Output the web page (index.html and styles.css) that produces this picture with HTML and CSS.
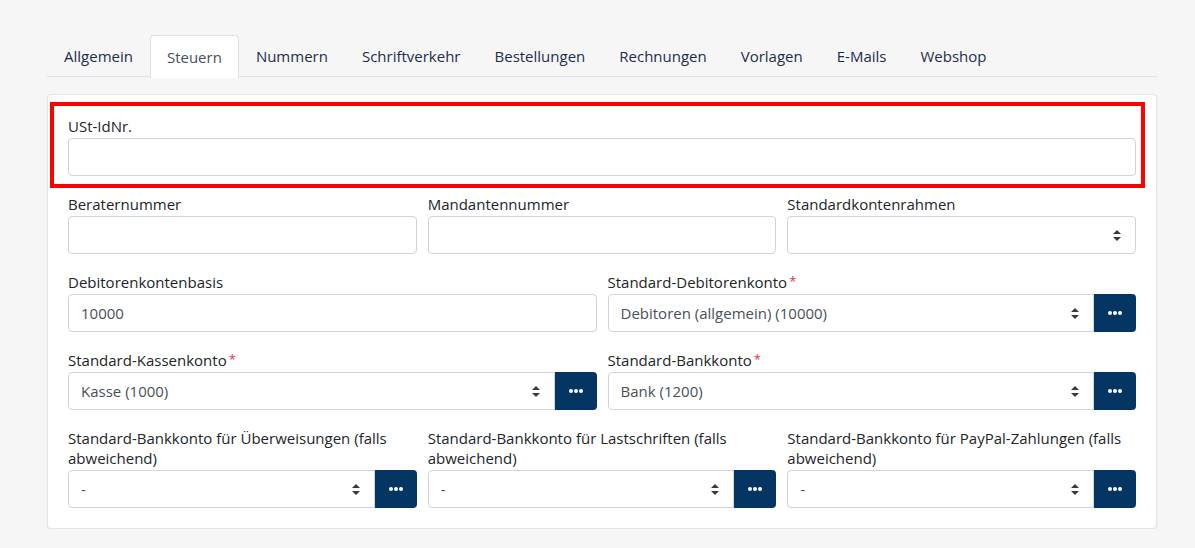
FILE: index.html
```html
<!DOCTYPE html>
<html lang="de">
<head>
<meta charset="utf-8">
<title>Einstellungen</title>
<link rel="stylesheet" href="styles.css">
</head>
<body>
<div class="page">
  <nav class="tabs">
    <a class="tab">Allgemein</a>
    <a class="tab active">Steuern</a>
    <a class="tab">Nummern</a>
    <a class="tab">Schriftverkehr</a>
    <a class="tab">Bestellungen</a>
    <a class="tab">Rechnungen</a>
    <a class="tab">Vorlagen</a>
    <a class="tab">E-Mails</a>
    <a class="tab">Webshop</a>
  </nav>
  <div class="card">
    <div class="group highlight">
      <label class="label">USt-IdNr.</label>
      <div class="input"></div>
    </div>
    <div class="row cols-3">
      <div class="group">
        <label class="label">Beraternummer</label>
        <div class="input"></div>
      </div>
      <div class="group">
        <label class="label">Mandantennummer</label>
        <div class="input"></div>
      </div>
      <div class="group">
        <label class="label">Standardkontenrahmen</label>
        <div class="input select"><span class="value"></span><span class="caret"></span></div>
      </div>
    </div>
    <div class="row cols-2">
      <div class="group">
        <label class="label">Debitorenkontenbasis</label>
        <div class="input"><span class="value">10000</span></div>
      </div>
      <div class="group">
        <label class="label">Standard-Debitorenkonto<span class="req">*</span></label>
        <div class="input-group">
          <div class="input select"><span class="value">Debitoren (allgemein) (10000)</span><span class="caret"></span></div>
          <button class="more"><span class="dots"><i></i><i></i><i></i></span></button>
        </div>
      </div>
    </div>
    <div class="row cols-2">
      <div class="group">
        <label class="label">Standard-Kassenkonto<span class="req">*</span></label>
        <div class="input-group">
          <div class="input select"><span class="value">Kasse (1000)</span><span class="caret"></span></div>
          <button class="more"><span class="dots"><i></i><i></i><i></i></span></button>
        </div>
      </div>
      <div class="group">
        <label class="label">Standard-Bankkonto<span class="req">*</span></label>
        <div class="input-group">
          <div class="input select"><span class="value">Bank (1200)</span><span class="caret"></span></div>
          <button class="more"><span class="dots"><i></i><i></i><i></i></span></button>
        </div>
      </div>
    </div>
    <div class="row cols-3">
      <div class="group">
        <label class="label">Standard-Bankkonto für Überweisungen (falls abweichend)</label>
        <div class="input-group">
          <div class="input select"><span class="value">-</span><span class="caret"></span></div>
          <button class="more"><span class="dots"><i></i><i></i><i></i></span></button>
        </div>
      </div>
      <div class="group">
        <label class="label">Standard-Bankkonto für Lastschriften (falls abweichend)</label>
        <div class="input-group">
          <div class="input select"><span class="value">-</span><span class="caret"></span></div>
          <button class="more"><span class="dots"><i></i><i></i><i></i></span></button>
        </div>
      </div>
      <div class="group">
        <label class="label">Standard-Bankkonto für PayPal-Zahlungen (falls abweichend)</label>
        <div class="input-group">
          <div class="input select"><span class="value">-</span><span class="caret"></span></div>
          <button class="more"><span class="dots"><i></i><i></i><i></i></span></button>
        </div>
      </div>
    </div>
  </div>
</div>
</body>
</html>
```
FILE: styles.css
```css
* { box-sizing: border-box; }
html, body { margin: 0; padding: 0; }
body {
  background: #f6f6f6;
  font-family: "Open Sans", "Noto Sans", sans-serif;
  font-size: 15px;
  color: #212529;
}
.page {
  width: 1110px;
  margin-left: 47px;
  padding-top: 35px;
}
.tabs {
  display: flex;
  border-bottom: 1px solid #dee2e6;
  height: 42px;
}
.tab {
  display: flex;
  align-items: center;
  height: 42px;
  padding: 0 16px 1px;
  color: #1c2d4c;
  border: 1px solid transparent;
  border-bottom: none;
  border-radius: 4px 4px 0 0;
  white-space: nowrap;
}
.tab.active {
  background: #fff;
  border-color: #dee2e6;
  color: #495057;
  height: 43px;
}
.card {
  margin-top: 17px;
  background: #fff;
  border: 1px solid #e3e5e8;
  border-radius: 4px;
  box-shadow: 0 1px 2px rgba(0,0,0,0.08);
  padding: 21px 20px 20px 20px;
  display: flex;
  flex-direction: column;
  gap: 18px;
}
.row { display: grid; gap: 11px; }
.cols-3 { grid-template-columns: repeat(3, 1fr); }
.cols-2 { grid-template-columns: repeat(2, 1fr); }
.group { display: flex; flex-direction: column; justify-content: flex-end; }
.highlight { position: relative; }
.highlight::after {
  content: "";
  position: absolute;
  left: -18px; right: -9px; top: -14px; bottom: -12px;
  border: 4px solid #f00;
  pointer-events: none;
}
.label {
  display: block;
  line-height: 20px;
  margin-bottom: 2px;
  color: #212529;
}
.req {
  color: #dc3545;
  font-size: 13px;
  line-height: 0;
  margin-left: 2px;
  position: relative;
  top: -2px;
}
.input {
  height: 38px;
  border: 1px solid #ced4da;
  border-radius: 4px;
  background: #fff;
  display: flex;
  align-items: center;
  padding: 0 12px;
  color: #495057;
}
.select { justify-content: space-between; padding-right: 14px; }
.value { white-space: nowrap; }
.caret {
  width: 8px;
  height: 11px;
  position: relative;
  flex: none;
}
.caret::before, .caret::after {
  content: "";
  position: absolute;
  left: 0;
  border-left: 4px solid transparent;
  border-right: 4px solid transparent;
}
.caret::before { top: 0; border-bottom: 4px solid #343a40; }
.caret::after { bottom: 0; border-top: 4px solid #343a40; }
.input-group { display: flex; }
.input-group .input { flex: 1; border-radius: 4px 0 0 4px; }
.more {
  width: 42px;
  height: 38px;
  border: none;
  border-radius: 0 4px 4px 0;
  background: #053563;
  display: flex;
  align-items: center;
  justify-content: center;
  padding: 0;
}
.dots { display: flex; gap: 1px; }
.dots i {
  width: 4px; height: 4px;
  border-radius: 50%;
  background: #fff;
  display: block;
}
```
